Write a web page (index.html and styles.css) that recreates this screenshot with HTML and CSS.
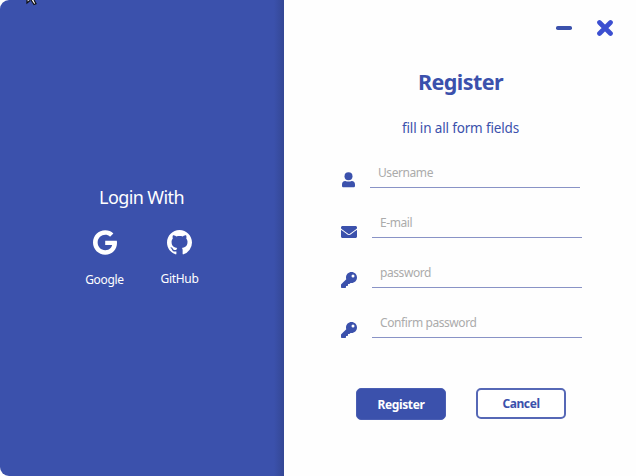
FILE: index.html
```html
<!DOCTYPE html>
<html lang="en">
<head>
<meta charset="utf-8">
<title>Register</title>
<link rel="stylesheet" href="styles.css">
</head>
<body>
<svg class="cursor" width="14" height="6" viewBox="0 0 14 6"><path d="M1 0v3l3-2.500M5 0l3 4.500 2-.8L8 0" fill="#fff" stroke="#111" stroke-width="1.200"/></svg>
<main class="window">
  <aside class="social">
    <h2 class="social-title">Login With</h2>
    <div class="providers">
      <a class="provider google">
        <svg width="24" height="25" viewBox="0 4 488 504"><path d="M488 261.800C488 403.300 391.100 504 248 504 110.800 504 0 393.200 0 256S110.800 8 248 8c66.800 0 123 24.500 166.300 64.900l-67.500 64.900C258.500 52.600 94.300 116.600 94.300 256c0 86.500 69.100 156.600 153.700 156.600 98.200 0 135-70.400 140.800-106.900H248v-85.300h236.100c2.300 12.700 3.900 24.900 3.900 41.400z"/></svg>
        <span>Google</span>
      </a>
      <a class="provider github">
        <svg width="25" height="25" viewBox="0 0 16 16"><path d="M8 0C3.580 0 0 3.580 0 8c0 3.540 2.290 6.530 5.470 7.590.4.070.55-.17.55-.38 0-.19-.01-.82-.01-1.490-2.010.37-2.530-.49-2.690-.94-.09-.23-.48-.94-.82-1.130-.28-.15-.68-.52-.01-.53.63-.01 1.080.58 1.230.82.72 1.210 1.870.87 2.330.66.07-.52.28-.87.51-1.070-1.780-.2-3.640-.89-3.640-3.950 0-.87.31-1.590.82-2.150-.08-.2-.36-1.020.08-2.120 0 0 .67-.21 2.200.82.64-.18 1.320-.27 2-.27s1.360.09 2 .27c1.530-1.040 2.200-.82 2.200-.82.44 1.100.16 1.920.08 2.120.51.56.82 1.270.82 2.150 0 3.070-1.870 3.750-3.650 3.950.29.25.54.73.54 1.480 0 1.070-.01 1.930-.01 2.200 0 .21.15.46.55.38A8 8 0 0 0 16 8c0-4.420-3.580-8-8-8z"/></svg>
        <span>GitHub</span>
      </a>
    </div>
  </aside>
  <section class="panel">
    <div class="controls">
      <svg width="16" height="4" viewBox="0 0 16 4"><rect width="16" height="4" rx="1.800" fill="#3b51ac"/></svg>
      <svg width="16" height="16" viewBox="0 0 16 16"><path d="M2.500 2.500l11 11M13.500 2.500l-11 11" stroke="#3c4fd0" stroke-width="4.700" stroke-linecap="round"/></svg>
    </div>
    <h1 class="title">Register</h1>
    <p class="subtitle">fill in all form fields</p>
    <form class="form">
      <label class="field first">
        <svg width="16" height="16" viewBox="0 0 16 16"><circle cx="7.500" cy="4.300" r="4"/><path d="M1 12.700C1 10.300 2.200 9 4.300 9c2 .8 4.400.8 6.400 0C12.800 9 14 10.300 14 12.700v1c0 1-.6 1.600-1.600 1.600H2.600C1.600 15.300 1 14.700 1 13.700z"/></svg>
        <input type="text" placeholder="Username">
      </label>
      <label class="field">
        <svg class="mail" width="16" height="12" viewBox="0 64 512 384"><path d="M502.300 190.800c3.900-3.100 9.700-.2 9.700 4.700V400c0 26.500-21.500 48-48 48H48c-26.500 0-48-21.500-48-48V195.600c0-5 5.700-7.800 9.700-4.700 22.400 17.400 52.100 39.500 154.100 113.600 21.100 15.400 56.700 47.800 92.200 47.600 35.700.3 72-32.800 92.300-47.600 102-74.100 131.600-96.300 154-113.700zM256 320c23.200.4 56.600-29.200 73.400-41.400 132.700-96.300 142.800-104.700 173.400-128.700 5.800-4.500 9.200-11.500 9.200-18.900v-19c0-26.500-21.500-48-48-48H48c-26.500 0-48 21.500-48 48v19c0 7.400 3.400 14.300 9.200 18.900 30.600 23.900 40.700 32.400 173.400 128.700 16.800 12.200 50.200 41.800 73.400 41.400z"/></svg>
        <input type="text" placeholder="E-mail">
      </label>
      <label class="field">
        <svg width="16" height="16" viewBox="0 0 512 512"><path d="M512 176c0 97.200-78.800 176-176 176-11.200 0-22.200-1.100-32.800-3.100l-24 27A24 24 0 0 1 261.200 384H224v40a24 24 0 0 1-24 24h-40v40a24 24 0 0 1-24 24H24a24 24 0 0 1-24-24v-78.100a24 24 0 0 1 7-17l161.800-161.800C163 213.800 160 195.300 160 176 160 78.800 238.800 0 336 0s176 78.500 176 176zM336 128a48 48 0 1 0 96 0 48 48 0 1 0-96 0z"/></svg>
        <input type="text" placeholder="password">
      </label>
      <label class="field">
        <svg width="16" height="16" viewBox="0 0 512 512"><path d="M512 176c0 97.200-78.800 176-176 176-11.200 0-22.200-1.100-32.800-3.100l-24 27A24 24 0 0 1 261.200 384H224v40a24 24 0 0 1-24 24h-40v40a24 24 0 0 1-24 24H24a24 24 0 0 1-24-24v-78.100a24 24 0 0 1 7-17l161.800-161.800C163 213.800 160 195.300 160 176 160 78.800 238.800 0 336 0s176 78.500 176 176zM336 128a48 48 0 1 0 96 0 48 48 0 1 0-96 0z"/></svg>
        <input type="text" placeholder="Confirm password">
      </label>
      <div class="actions">
        <button type="button" class="btn primary">Register</button>
        <button type="button" class="btn outline">Cancel</button>
      </div>
    </form>
  </section>
</main>
</body>
</html>
```
FILE: styles.css
```css
* { box-sizing: border-box; }
body {
  margin: 0;
  background: #fff;
  font-family: "Noto Sans", "Open Sans", sans-serif;
  color: #3b51ac;
}
h1, h2, p { margin: 0; }
svg { display: block; flex: none; }
.cursor { position: absolute; left: 26px; top: 0; }
.window { display: flex; width: 636px; height: 476px; background: #fefefe; }
.social {
  width: 284px;
  padding-top: 184px;
  border-radius: 9px 0 0 9px;
  background: linear-gradient(to right, #3b51ac 0, #3b51ac 274px, #344794 284px);
  color: #fff;
}
.social-title {
  padding-right: 1px;
  font-size: 18px;
  font-weight: 400;
  line-height: 26px;
  text-align: center;
  letter-spacing: -.6px;
}
.providers { display: flex; gap: 34px; padding: 20px 0 0 84px; }
.provider {
  display: flex;
  flex-direction: column;
  align-items: center;
  width: 41px;
  font-size: 12px;
  line-height: 16px;
  letter-spacing: -.3px;
}
.provider svg { fill: #fff; }
.provider span { margin-top: 17px; }
.github span { margin-top: 16px; }
.panel { width: 352px; }
.controls {
  display: flex;
  align-items: center;
  justify-content: flex-end;
  gap: 25px;
  padding: 20px 23px 0 0;
}
.title {
  margin-top: 30px;
  padding-left: 1px;
  font-size: 21.5px;
  line-height: 32px;
  text-align: center;
  letter-spacing: -.55px;
}
.subtitle {
  margin-top: 20px;
  padding-left: 1px;
  font-size: 13.5px;
  line-height: 20px;
  text-align: center;
  letter-spacing: -.15px;
}
.form { padding: 20px 0 0 57px; }
.field { display: flex; gap: 15px; height: 50px; }
.field.first { gap: 13px; }
.field svg { margin-top: 14px; fill: #3b51ac; }
.field .mail { margin-top: 18px; }
.field input {
  width: 210px;
  height: 30px;
  padding: 0 8px;
  border: 0;
  border-bottom: 1px solid #8993c6;
  background: transparent;
  font: 12px "Noto Sans", sans-serif;
  letter-spacing: -.42px;
  color: #3b51ac;
}
.field input::placeholder { color: #ababab; opacity: 1; }
.actions { display: flex; gap: 30px; padding: 30px 0 0 15px; }
.btn {
  width: 90px;
  height: 32px;
  padding: 0;
  border-radius: 5px;
  font: bold 12px "Noto Sans", sans-serif;
  letter-spacing: -.4px;
}
.primary { border: 1px solid #4a5eb3; background: #3b51ac; color: #fff; }
.outline { height: 31px; border: 2px solid #5668b6; background: #fff; color: #3b51ac; }
```
